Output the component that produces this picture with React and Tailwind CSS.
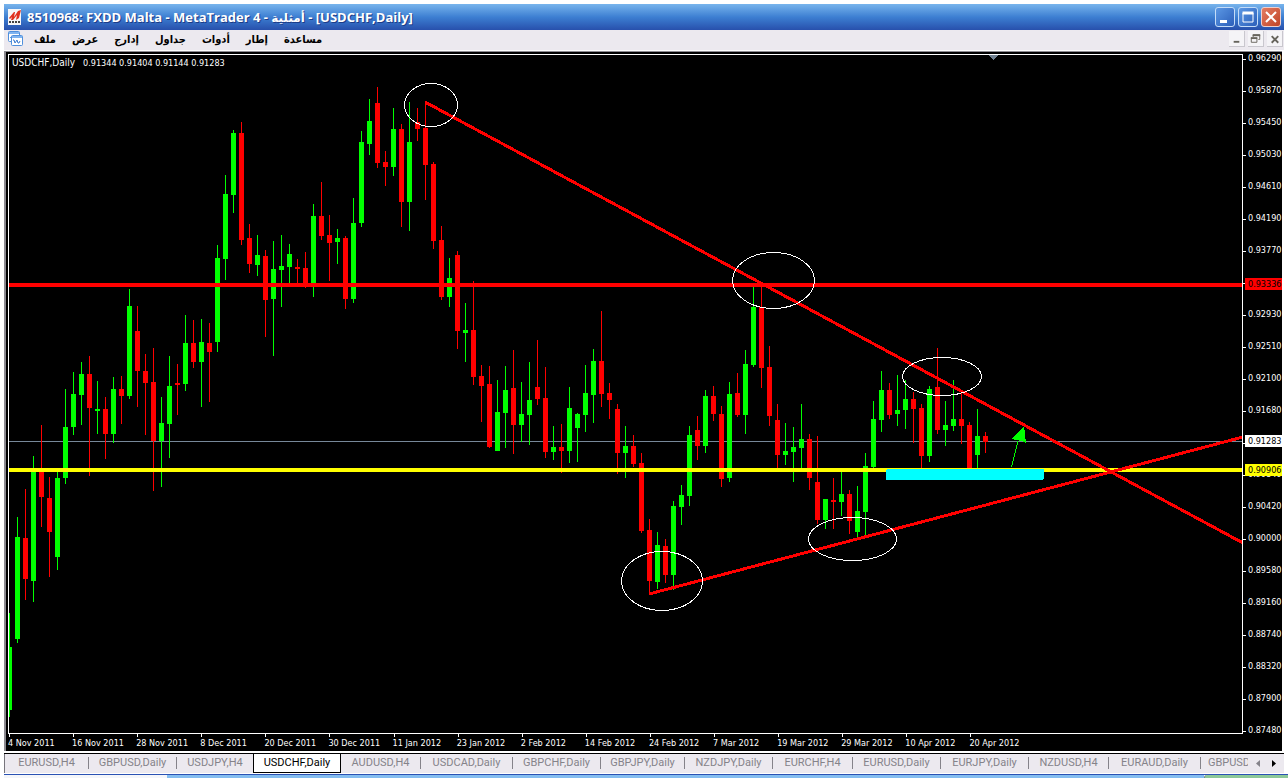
const MENU_ITEMS = ['ملف', 'عرض', 'إدارج', 'جداول', 'أدوات', 'إطار', 'مساعدة'];

const TABS = [
    { label: 'EURUSD,H4', width: 'w-21' },
    { label: 'GBPUSD,Daily', width: 'w-22' },
    { label: 'USDJPY,H4', width: 'w-19' },
    { label: 'USDCHF,Daily', width: 'w-22' },
    { label: 'AUDUSD,H4', width: 'w-20' },
    { label: 'USDCAD,Daily', width: 'w-23' },
    { label: 'GBPCHF,Daily', width: 'w-22' },
    { label: 'GBPJPY,Daily', width: 'w-21' },
    { label: 'NZDJPY,Daily', width: 'w-22' },
    { label: 'EURCHF,H4', width: 'w-20' },
    { label: 'EURUSD,Daily', width: 'w-22' },
    { label: 'EURJPY,Daily', width: 'w-22' },
    { label: 'NZDUSD,H4', width: 'w-20' },
    { label: 'EURAUD,Daily', width: 'w-23' },
    { label: 'GBPUSD', width: 'w-14' },
];
const ACTIVE_TAB = 3;

const DATES = [
    '4 Nov 2011',
    '16 Nov 2011',
    '28 Nov 2011',
    '8 Dec 2011',
    '20 Dec 2011',
    '30 Dec 2011',
    '11 Jan 2012',
    '23 Jan 2012',
    '2 Feb 2012',
    '14 Feb 2012',
    '24 Feb 2012',
    '7 Mar 2012',
    '19 Mar 2012',
    '29 Mar 2012',
    '10 Apr 2012',
    '20 Apr 2012',
];

// Empty entries keep their tick, the label is covered by a price badge
const PRICES = [
    '0.96290', '0.95870', '0.95450', '0.95030', '0.94610', '0.94190', '0.93770', '',
    '0.92930', '0.92510', '0.92100', '0.91680', '', '0.90840', '0.90420', '0.90000',
    '0.89580', '0.89160', '0.88740', '0.88320', '0.87900', '0.87480',
];
const PRICE_TOP = 0.9629;
const PRICE_BOTTOM = 0.8748;

const BADGES = [
    { price: '0.93336', color: 'bg-[#ff0000] text-black' },
    { price: '0.91283', color: 'bg-white text-black' },
    { price: '0.90906', color: 'bg-[#ffff00] text-black' },
];

const PLOT_WIDTH = 1233;
const BAR_STEP = 8;
const BARS_PER_LABEL = 8;

const UP = '#00ff00';
const DOWN = '#ff0000';

// [direction, high, body top, body bottom, low]
const CANDLES = [
    ['u', 613, 647, 710, 717],
    ['u', 517, 537, 639, 643],
    ['d', 489, 538, 579, 600],
    ['u', 456, 470, 581, 602],
    ['d', 425, 470, 497, 527],
    ['d', 477, 498, 532, 577],
    ['u', 471, 478, 557, 570],
    ['u', 389, 427, 478, 484],
    ['u', 372, 394, 427, 435],
    ['u', 362, 374, 395, 425],
    ['d', 356, 374, 408, 476],
    ['u', 381, 409, 411, 434],
    ['d', 397, 409, 434, 459],
    ['u', 377, 389, 434, 443],
    ['d', 376, 389, 396, 424],
    ['u', 289, 306, 396, 399],
    ['d', 306, 331, 371, 407],
    ['d', 354, 371, 383, 435],
    ['d', 348, 382, 441, 491],
    ['u', 397, 423, 441, 487],
    ['u', 356, 386, 424, 458],
    ['d', 364, 383, 385, 415],
    ['u', 315, 343, 384, 391],
    ['d', 320, 343, 362, 368],
    ['u', 319, 342, 362, 407],
    ['d', 323, 343, 352, 402],
    ['u', 245, 258, 342, 352],
    ['u', 175, 194, 259, 280],
    ['u', 130, 133, 195, 213],
    ['d', 122, 133, 240, 245],
    ['d', 224, 238, 264, 273],
    ['u', 235, 255, 265, 276],
    ['d', 250, 256, 300, 337],
    ['u', 241, 269, 299, 356],
    ['u', 235, 266, 270, 307],
    ['u', 244, 254, 267, 283],
    ['d', 259, 267, 269, 284],
    ['d', 252, 268, 285, 288],
    ['u', 204, 216, 284, 297],
    ['d', 182, 216, 236, 240],
    ['d', 215, 235, 243, 281],
    ['u', 229, 238, 242, 264],
    ['d', 236, 238, 299, 309],
    ['u', 198, 223, 299, 303],
    ['u', 131, 142, 223, 227],
    ['u', 99, 121, 144, 155],
    ['d', 87, 103, 163, 168],
    ['d', 151, 162, 167, 186],
    ['u', 108, 129, 167, 176],
    ['d', 124, 129, 202, 227],
    ['u', 102, 142, 202, 231],
    ['d', 108, 122, 129, 141],
    ['d', 102, 128, 165, 200],
    ['d', 162, 164, 241, 249],
    ['d', 226, 240, 297, 300],
    ['u', 258, 278, 297, 307],
    ['d', 251, 255, 331, 349],
    ['u', 303, 330, 333, 362],
    ['d', 281, 330, 377, 385],
    ['d', 365, 376, 386, 422],
    ['d', 366, 384, 447, 448],
    ['u', 380, 412, 451, 451],
    ['u', 366, 390, 413, 448],
    ['d', 350, 388, 425, 454],
    ['u', 382, 414, 425, 442],
    ['u', 362, 400, 415, 445],
    ['d', 340, 387, 399, 405],
    ['d', 367, 398, 452, 458],
    ['u', 426, 447, 452, 460],
    ['d', 424, 447, 451, 473],
    ['u', 387, 408, 451, 463],
    ['u', 413, 414, 428, 462],
    ['u', 365, 393, 415, 432],
    ['u', 349, 361, 395, 423],
    ['d', 311, 361, 394, 407],
    ['d', 383, 393, 400, 419],
    ['d', 404, 409, 453, 474],
    ['u', 426, 446, 453, 478],
    ['d', 435, 446, 464, 467],
    ['d', 453, 463, 531, 533],
    ['d', 519, 530, 581, 594],
    ['u', 532, 545, 582, 589],
    ['d', 539, 546, 575, 583],
    ['u', 501, 506, 575, 590],
    ['u', 485, 495, 507, 525],
    ['u', 426, 435, 496, 506],
    ['d', 416, 430, 446, 460],
    ['u', 390, 396, 446, 453],
    ['d', 386, 396, 414, 421],
    ['d', 406, 414, 479, 487],
    ['u', 382, 394, 478, 482],
    ['d', 373, 393, 415, 417],
    ['u', 350, 364, 415, 434],
    ['u', 287, 307, 365, 367],
    ['d', 285, 307, 368, 388],
    ['d', 346, 367, 416, 426],
    ['d', 404, 420, 455, 468],
    ['u', 423, 451, 455, 465],
    ['u', 427, 447, 452, 482],
    ['u', 404, 439, 448, 468],
    ['d', 434, 439, 478, 490],
    ['d', 436, 482, 520, 524],
    ['u', 499, 499, 520, 529],
    ['d', 478, 500, 502, 529],
    ['u', 472, 494, 502, 516],
    ['d', 490, 494, 521, 534],
    ['u', 486, 511, 532, 537],
    ['u', 453, 466, 512, 535],
    ['u', 401, 419, 467, 468],
    ['u', 371, 390, 420, 432],
    ['d', 383, 390, 415, 419],
    ['u', 375, 410, 414, 426],
    ['u', 380, 399, 410, 429],
    ['d', 392, 399, 409, 443],
    ['d', 404, 408, 456, 468],
    ['u', 386, 389, 456, 462],
    ['d', 348, 387, 430, 434],
    ['u', 401, 425, 430, 446],
    ['u', 380, 419, 426, 431],
    ['d', 392, 419, 426, 444],
    ['d', 422, 425, 468, 468],
    ['u', 409, 436, 455, 468],
    ['d', 432, 436, 442, 453],
];

const ELLIPSES = [
    { cx: 431, cy: 105, rx: 26.5, ry: 21.5 },
    { cx: 773.5, cy: 280.5, rx: 41, ry: 28 },
    { cx: 942, cy: 376.5, rx: 39.5, ry: 19 },
    { cx: 852.5, cy: 539, rx: 44, ry: 21.5 },
    { cx: 662, cy: 581, rx: 40.5, ry: 29.5 },
];

function AppLogo() {
    return (
        <svg viewBox="0 0 16 16" className="size-4 shrink-0" aria-hidden="true">
            <rect x="1" width="13" height="16" fill="#f6f6f8" />
            <path d="M2 9L7 3L8 3L7 8L11 2L14 1L12 9L9 11L10 6L6 11L4 11L5 8L3 10Z" fill="#e0301e" />
            <path d="M2 13h2M5 13h2M8 13h2M11 13h2" stroke="#444" strokeWidth="2" />
        </svg>
    );
}

function ChartIcon() {
    return (
        <svg viewBox="0 0 16 16" className="size-4 shrink-0" aria-hidden="true">
            <rect x="0.5" y="0.5" width="11" height="10" rx="1" fill="#fff" stroke="#4f8fdc" />
            <path d="M1 2h10" stroke="#7fb4f0" strokeWidth="2" />
            <path d="M2 7l2-2 1 2 2-2" fill="none" stroke="#5c9ce6" />
            <rect x="3.5" y="4.5" width="11" height="10" rx="1" fill="#fff" stroke="#4f8fdc" />
            <path d="M4 6h10" stroke="#7fb4f0" strokeWidth="2" />
            <path d="M5 9l1 0 1 3 2-3 1 3h1l1-2" fill="none" stroke="#3a7ad0" />
        </svg>
    );
}

function TitleBar() {
    const button =
        'flex size-5 items-center justify-center rounded-[3px] border border-[#c4dcf8] bg-linear-to-br from-[#5c98e4] to-[#2c5fba]';
    return (
        <header className="flex h-[26px] shrink-0 items-center bg-linear-to-b from-[#78b4ec] via-[#3d7fd2] to-[#2850ac] pr-[3px] pl-[3px]">
            <AppLogo />
            <h1 className="ml-1 flex-1 truncate font-['Open_Sans','DejaVu_Sans',sans-serif] text-[13px] leading-5 font-bold text-white [text-shadow:1px_1px_0_#1c3c88]">
                8510968: FXDD Malta - MetaTrader 4 - <bdi className="text-[12px]">أمثلية</bdi> - [USDCHF,Daily]
            </h1>
            <div className="flex gap-[3px]">
                <button aria-label="Minimize" className={button}>
                    <svg viewBox="0 0 18 18" className="size-[18px]">
                        <path d="M4 12h7v3H4z" fill="#fff" />
                    </svg>
                </button>
                <button aria-label="Maximize" className={button}>
                    <svg viewBox="0 0 18 18" className="size-[18px]">
                        <path d="M4 5h10v9H4z" fill="none" stroke="#fff" />
                        <path d="M3.5 5h11" stroke="#fff" strokeWidth="3" />
                    </svg>
                </button>
                <button
                    aria-label="Close"
                    className="flex size-5 items-center justify-center rounded-[3px] border border-[#f0d0cc] bg-linear-to-br from-[#e47c62] to-[#c04426]"
                >
                    <svg viewBox="0 0 18 18" className="size-[18px]">
                        <path d="M4 4l10 10M14 4L4 14" stroke="#fff" strokeWidth="2" />
                    </svg>
                </button>
            </div>
        </header>
    );
}

function MenuBar() {
    const button =
        'flex size-4 items-center justify-center border-r border-b border-[#c9c7ce] bg-[#f5f4f7]';
    return (
        <div className="flex h-[21px] shrink-0 items-start border-b border-white bg-[#ece9ef] pr-px pl-1">
            <span className="mt-px">
                <ChartIcon />
            </span>
            <nav className="ml-2.5 flex flex-1 gap-4">
                {MENU_ITEMS.map((item) => (
                    <button
                        key={item}
                        dir="rtl"
                        className="font-['DejaVu_Sans_Condensed','DejaVu_Sans',sans-serif] text-[11px] leading-5 font-bold text-black"
                    >
                        {item}
                    </button>
                ))}
            </nav>
            <div className="mt-px flex gap-[3px]">
                <button aria-label="Minimize chart" className={button}>
                    <svg viewBox="0 0 16 16" className="size-4">
                        <path d="M5 10h6v2H5z" fill="#66645c" />
                    </svg>
                </button>
                <button aria-label="Restore chart" className={button}>
                    <svg viewBox="0 0 16 16" className="size-4" fill="none" stroke="#66645c">
                        <path d="M5.5 6V3.5h7v5H11" />
                        <path d="M5 4h8" strokeWidth="2" />
                        <path d="M3.5 7.5h6v4h-6z" />
                        <path d="M3 7h7" strokeWidth="2" />
                    </svg>
                </button>
                <button aria-label="Close chart" className={button}>
                    <svg viewBox="0 0 16 16" className="size-4">
                        <path d="M5 5l7 7M12 5l-7 7" stroke="#66645c" strokeWidth="2" />
                    </svg>
                </button>
            </div>
        </div>
    );
}

function Plot() {
    return (
        <svg
            viewBox="9 55 1233 678"
            preserveAspectRatio="none"
            shapeRendering="crispEdges"
            className="absolute inset-0 size-full"
            role="img"
            aria-label="USDCHF daily candlestick chart"
        >
            <path d="M9 441.5H1242" stroke="#778899" />
            {CANDLES.map(([dir, high, top, bottom, low], i) => {
                const x = 9 + i * BAR_STEP;
                const fill = dir === 'u' ? UP : DOWN;
                return (
                    <g key={x} fill={fill}>
                        <rect x={x} y={high} width="1" height={low - high} />
                        <rect x={x - 2} y={top} width="5" height={bottom - top} />
                    </g>
                );
            })}

            {/* Support and resistance levels */}
            <rect x="9" y="283" width="1233" height="4" fill="#ff0000" />
            <rect x="9" y="468" width="1233" height="4" fill="#ffff00" />
            <rect x="886" y="469" width="158" height="11" rx="2" fill="#00ffff" />

            {/* Trend lines */}
            <path d="M425 102L1243 543M649 594L1243 437" stroke="#ff0000" strokeWidth="3" />

            {ELLIPSES.map((e) => (
                <ellipse key={e.cx} {...e} fill="none" stroke="#fff" />
            ))}

            <path d="M1011.5 467L1018 441" stroke="#00ff00" />
            <path d="M1024 426L1011 439L1022 441L1026 443Z" fill="#00ff00" />
            <path d="M989 55h9l-4.500 5z" fill="#708090" />
        </svg>
    );
}

function PriceAxis() {
    return (
        <div className="relative flex w-[39px] shrink-0 flex-col justify-between pb-[13px]">
            {PRICES.map((price, i) => (
                <div key={i} className="flex h-3.5 items-center gap-0.5">
                    <span className="h-px w-[3px] bg-white" />
                    <span>{price}</span>
                </div>
            ))}
            <div className="absolute inset-x-0 top-[7px] bottom-5">
                {BADGES.map(({ price, color }) => (
                    <span
                        key={price}
                        className={`absolute right-0 left-0.5 -translate-y-1/2 pl-[3px] leading-3 ${color}`}
                        style={{ top: `${((PRICE_TOP - Number(price)) / (PRICE_TOP - PRICE_BOTTOM)) * 100}%` }}
                    >
                        {price}
                    </span>
                ))}
            </div>
        </div>
    );
}

function Chart() {
    return (
        <main className="mr-0.5 flex min-h-0 flex-1 border-t border-l-2 border-[#8c8a90] bg-black pl-0.5 font-['DejaVu_Sans_Condensed','DejaVu_Sans',sans-serif] text-[9px] text-white">
            <div className="flex min-w-0 flex-1 flex-col pt-0.5">
                <div className="relative min-h-0 flex-1 border border-white">
                    <Plot />
                    <p className="absolute top-0 left-[3px] flex items-baseline gap-2 leading-4">
                        <span className="text-[10px]">USDCHF,Daily</span>
                        <span>0.91344 0.91404 0.91144 0.91283</span>
                    </p>
                </div>
                <div className="flex h-[17px] shrink-0">
                    {DATES.map((date) => (
                        <div
                            key={date}
                            className="shrink-0 whitespace-nowrap"
                            style={{ width: `${((BAR_STEP * BARS_PER_LABEL) / PLOT_WIDTH) * 100}%` }}
                        >
                            <div className="ml-px h-[3px] w-px bg-white" />
                            <div className="leading-3">{date}</div>
                        </div>
                    ))}
                </div>
            </div>
            <PriceAxis />
        </main>
    );
}

function ChartTabs() {
    return (
        <div className="mt-0.5 flex h-5 shrink-0 border-t border-black bg-[#ece9ef]">
            <div
                role="tablist"
                className="flex min-w-0 flex-1 overflow-hidden border-l border-[#77757c] font-[Roboto,sans-serif] text-[11px] leading-[18px] whitespace-nowrap"
            >
                {TABS.map(({ label, width }, i) => {
                    const active = i === ACTIVE_TAB;
                    const last = i === TABS.length - 1;
                    return (
                        <button
                            key={label}
                            role="tab"
                            aria-selected={active}
                            className={`shrink-0 ${width} ${
                                active
                                    ? 'h-[19px] border-x border-b border-black bg-white text-black'
                                    : 'flex h-[18px] items-center text-[#85838a]'
                            }`}
                        >
                            {active ? label : <span className="flex-1">{label}</span>}
                            {!active && !last && i + 1 !== ACTIVE_TAB && (
                                <span className="h-3 w-px bg-[#85838a]" />
                            )}
                        </button>
                    );
                })}
            </div>
            <div className="flex w-9 shrink-0 items-center justify-between pr-2 pl-2">
                <button aria-label="Previous tabs">
                    <svg viewBox="0 0 4 7" className="h-[7px] w-1">
                        <path d="M4 0v7L0 3.500z" fill="#85838a" />
                    </svg>
                </button>
                <button aria-label="Next tabs">
                    <svg viewBox="0 0 4 7" className="h-[7px] w-1">
                        <path d="M0 0v7l4-3.500z" fill="#000" />
                    </svg>
                </button>
            </div>
        </div>
    );
}

function App() {
    return (
        <div className="flex h-screen flex-col overflow-hidden bg-white pt-1 pl-1">
            <div className="flex min-h-0 flex-1 flex-col pr-1">
                <TitleBar />
                <MenuBar />
                <Chart />
                <ChartTabs />
            </div>
            {/* Edge of the desktop taskbar */}
            <footer className="mt-px flex h-1 shrink-0 border-t border-[#2a52b4]">
                <div className="w-[163px] bg-[#f4f6fa]" />
                <div className="flex-1 bg-[#84bdf0]" />
                <div className="w-21 rounded-tl-[3px] border-l border-[#70808c] bg-[#8cc898]" />
            </footer>
        </div>
    );
}

export default App;
